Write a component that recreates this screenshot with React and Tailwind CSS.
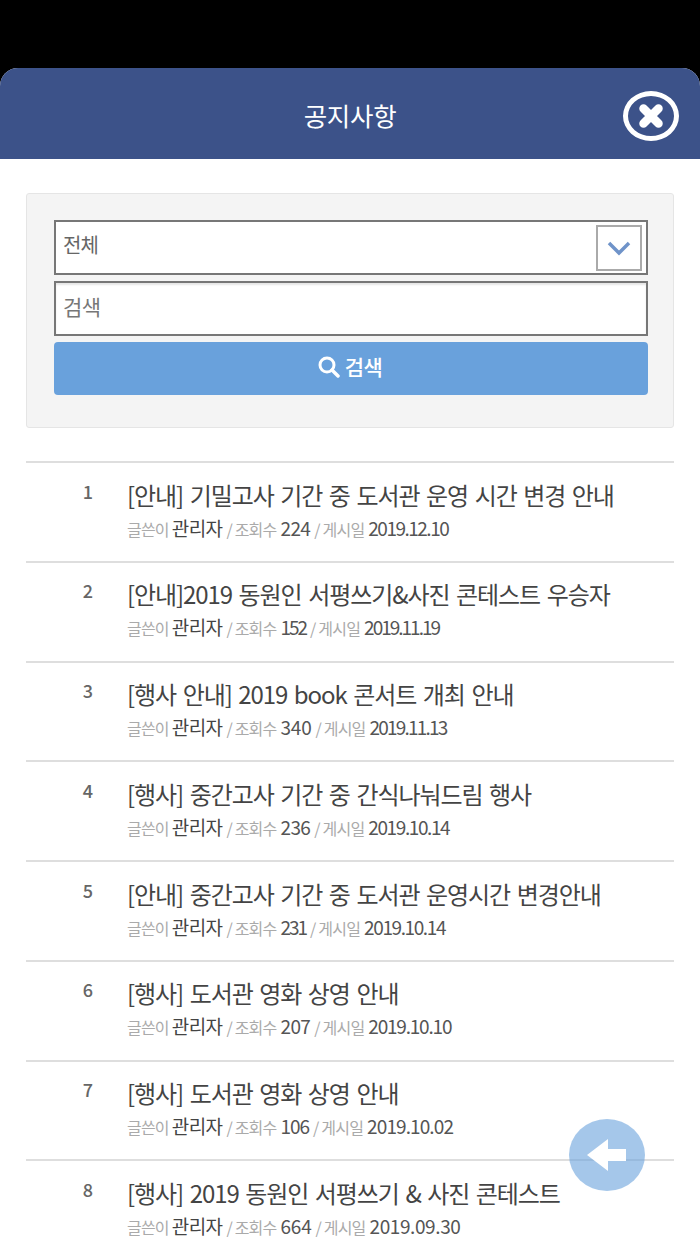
const rows = [
  { n: "1", title: "[안내] 기밀고사 기간 중 도서관 운영 시간 변경 안내", views: "224", date: "2019.12.10", vt: "tracking-[-0.6px]", dt: "tracking-[-1.5px]" },
  { n: "2", title: "[안내]2019 동원인 서평쓰기&사진 콘테스트 우승자", views: "152", date: "2019.11.19", vt: "tracking-[-2px]", dt: "tracking-[-2px]" },
  { n: "3", title: "[행사 안내] 2019 book 콘서트 개최 안내", views: "340", date: "2019.11.13", vt: "tracking-[-0.2px]", dt: "tracking-[-1.8px]" },
  { n: "4", title: "[행사] 중간고사 기간 중 간식나눠드림 행사", views: "236", date: "2019.10.14", vt: "tracking-[-0.6px]", dt: "tracking-[-1.4px]" },
  { n: "5", title: "[안내] 중간고사 기간 중 도서관 운영시간 변경안내", views: "231", date: "2019.10.14", vt: "tracking-[-2px]", dt: "tracking-[-1.4px]" },
  { n: "6", title: "[행사] 도서관 영화 상영 안내", views: "207", date: "2019.10.10", vt: "tracking-[-0.6px]", dt: "tracking-[-1.2px]" },
  { n: "7", title: "[행사] 도서관 영화 상영 안내", views: "106", date: "2019.10.02", vt: "tracking-[-1px]", dt: "tracking-[-0.9px]" },
  { n: "8", title: "[행사] 2019 동원인 서평쓰기 & 사진 콘테스트", views: "664", date: "2019.09.30", vt: "tracking-[-0.2px]", dt: "tracking-[-0.4px]" },
];
const font = { fontFamily: '"Noto Sans CJK KR", "Noto Sans", sans-serif' };

function Row({ n, title, views, date, vt, dt }) {
  return (
    <div className="flex h-[99.75px] border-t-2 border-[#dedede]">
      <div className="w-[101px] shrink-0 pt-[15.5px] pr-[34px] text-right text-[18px] font-medium leading-[24px] text-[#666666]">{n}</div>
      <div className="min-w-0 pt-[15.5px]">
        <div className="whitespace-nowrap text-[24px] leading-[32px] tracking-[-1.08px] text-[#444444] [word-spacing:2.3px]">{title}</div>
        <div className="mt-[3px] flex items-baseline whitespace-nowrap text-[16px] leading-[28px] tracking-[-0.8px] text-[#aaaaaa]">
          <span>글쓴이</span>
          <span className="ml-[3px] text-[19px] tracking-[-0.6px] text-[#444444]">관리자</span>
          <span className="ml-[4px]">/ 조회수</span>
          <span className={"ml-[4px] text-[19px] text-[#555555] " + vt}>{views}</span>
          <span className="ml-[4px]">/ 게시일</span>
          <span className={"ml-[4px] text-[19px] text-[#555555] " + dt}>{date}</span>
        </div>
      </div>
    </div>
  );
}

export default function App() {
  return (
    <div style={font} className="relative h-[1244px] w-[700px] overflow-hidden bg-black pt-[68px]">
      <div className="h-full overflow-hidden rounded-t-[18px] bg-white">
        <header className="relative flex h-[91px] items-center justify-center bg-[#3c5289]">
          <h1 className="pt-[3px] text-[25.5px] font-normal tracking-[-0.3px] text-white">공지사항</h1>
          <div className="absolute right-[21px] top-[23px] flex h-[50px] w-[56px] items-center justify-center rounded-[50%] border-[5px] border-white">
            <svg width="30" height="30" viewBox="0 0 30 30" aria-hidden="true">
              <path d="M7.5 7.5 L22.5 22.5 M22.5 7.5 L7.5 22.5" stroke="#fff" strokeWidth="8.5" strokeLinecap="round" />
            </svg>
          </div>
        </header>

        <main className="px-[26px] pt-[34px]">
          <section className="h-[235px] rounded-[3px] border border-[#e5e5e5] bg-[#f4f4f4] pr-[25px] pl-[27px] pt-[26px]">
            <div className="flex h-[55px] items-center justify-between border-2 border-[#777777] bg-white pr-[4px] pl-[7px]">
              <span className="-mt-[6px] text-[20px] tracking-[-1px] text-[#666666]">전체</span>
              <div className="flex h-[46px] w-[46px] items-center justify-center border-2 border-[#aaaaaa]">
                <svg width="26" height="18" viewBox="0 0 26 18" aria-hidden="true">
                  <path d="M3 4 L13 14 L23 4" fill="none" stroke="#6f93c9" strokeWidth="3.5" />
                </svg>
              </div>
            </div>
            <div className="mt-[6px] flex h-[55px] items-center border-2 border-[#777777] bg-white pl-[7px] shadow-[inset_0_2px_2px_rgba(0,0,0,0.1)]">
              <span className="-mt-[4px] text-[21px] tracking-[-0.5px] text-[#777777]">검색</span>
            </div>
            <div className="mt-[6px] flex h-[53px] items-center justify-center gap-[5px] rounded-[4px] bg-[#69a1dc] pr-[2px] pb-[4px]">
              <svg width="22" height="22" viewBox="0 0 22 22" aria-hidden="true">
                <circle cx="9" cy="9" r="7" fill="none" stroke="#fff" strokeWidth="3" />
                <path d="M14 14 L20 20" stroke="#fff" strokeWidth="3.5" strokeLinecap="round" />
              </svg>
              <span className="text-[21px] font-medium tracking-[-0.5px] text-white">검색</span>
            </div>
          </section>

          <div className="mt-[33px]">
            {rows.map((r) => (
              <Row key={r.n} {...r} />
            ))}
          </div>
        </main>
      </div>

      <div className="absolute left-[569px] top-[1119px] flex h-[72px] w-[76px] items-center justify-center rounded-[50%] bg-[#69a1dc]/60">
        <svg width="42" height="34" viewBox="0 0 42 34" aria-hidden="true">
          <path d="M1 17 L22 1 V11 H40 V23 H22 V33 Z" fill="#fff" />
        </svg>
      </div>
    </div>
  );
}
